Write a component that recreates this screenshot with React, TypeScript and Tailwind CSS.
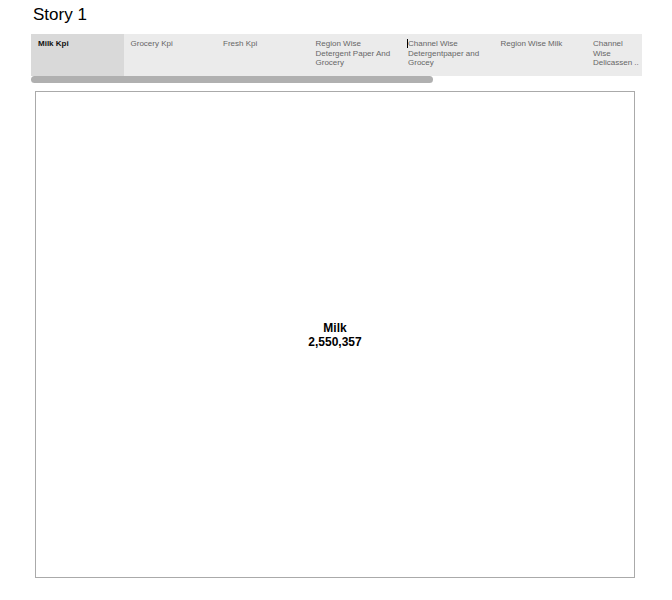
import React from "react";

const tabs = [
  "Milk Kpi",
  "Grocery Kpi",
  "Fresh Kpi",
  "Region Wise Detergent Paper And Grocery",
  "Channel Wise Detergentpaper and Grocey",
  "Region Wise Milk",
  "Channel Wise Delicassen ..",
];

export default function App() {
  return (
    <div className="w-[672px] h-[600px] bg-white" style={{ fontFamily: '"Liberation Sans", Arial, sans-serif' }}>
      <div className="pl-[33px] pt-[5px] h-[34px] text-[17px] leading-[20px] text-black">Story 1</div>
      <div className="ml-[31px] w-[611px]">
        <div className="h-[42px] overflow-hidden bg-[#ebebeb]">
          <div className="flex w-[925px] h-full">
            {tabs.map((t, i) => (
              <div
                key={i}
                className={
                  "relative w-[92.5px] shrink-0 h-full pl-[7px] pr-[4px] pt-[5px] text-[8px] leading-[9.5px] " +
                  (i === 0 ? "bg-[#d9d9d9] text-[#111] font-bold" : "text-[#666]")
                }
              >
                {i === 4 && <span className="absolute left-[6px] top-[5px] w-px h-[9px] bg-black" />}
                {i === 6 ? (
                  <span className="block w-[44px]">
                    Channel<br />Wise<br /><span className="whitespace-nowrap">Delicassen ..</span>
                  </span>
                ) : (
                  <span className="block">{t}</span>
                )}
              </div>
            ))}
          </div>
        </div>
        <div className="h-[7px] w-[402px] rounded-full bg-[#b0b0b0]" />
      </div>
      <div className="ml-[35px] mt-[8px] w-[600px] h-[487px] border border-[#aaaaaa] flex items-center justify-center">
        <div className="text-center text-[12px] leading-[14px] font-bold text-black">
          <div>Milk</div>
          <div>2,550,357</div>
        </div>
      </div>
    </div>
  );
}
